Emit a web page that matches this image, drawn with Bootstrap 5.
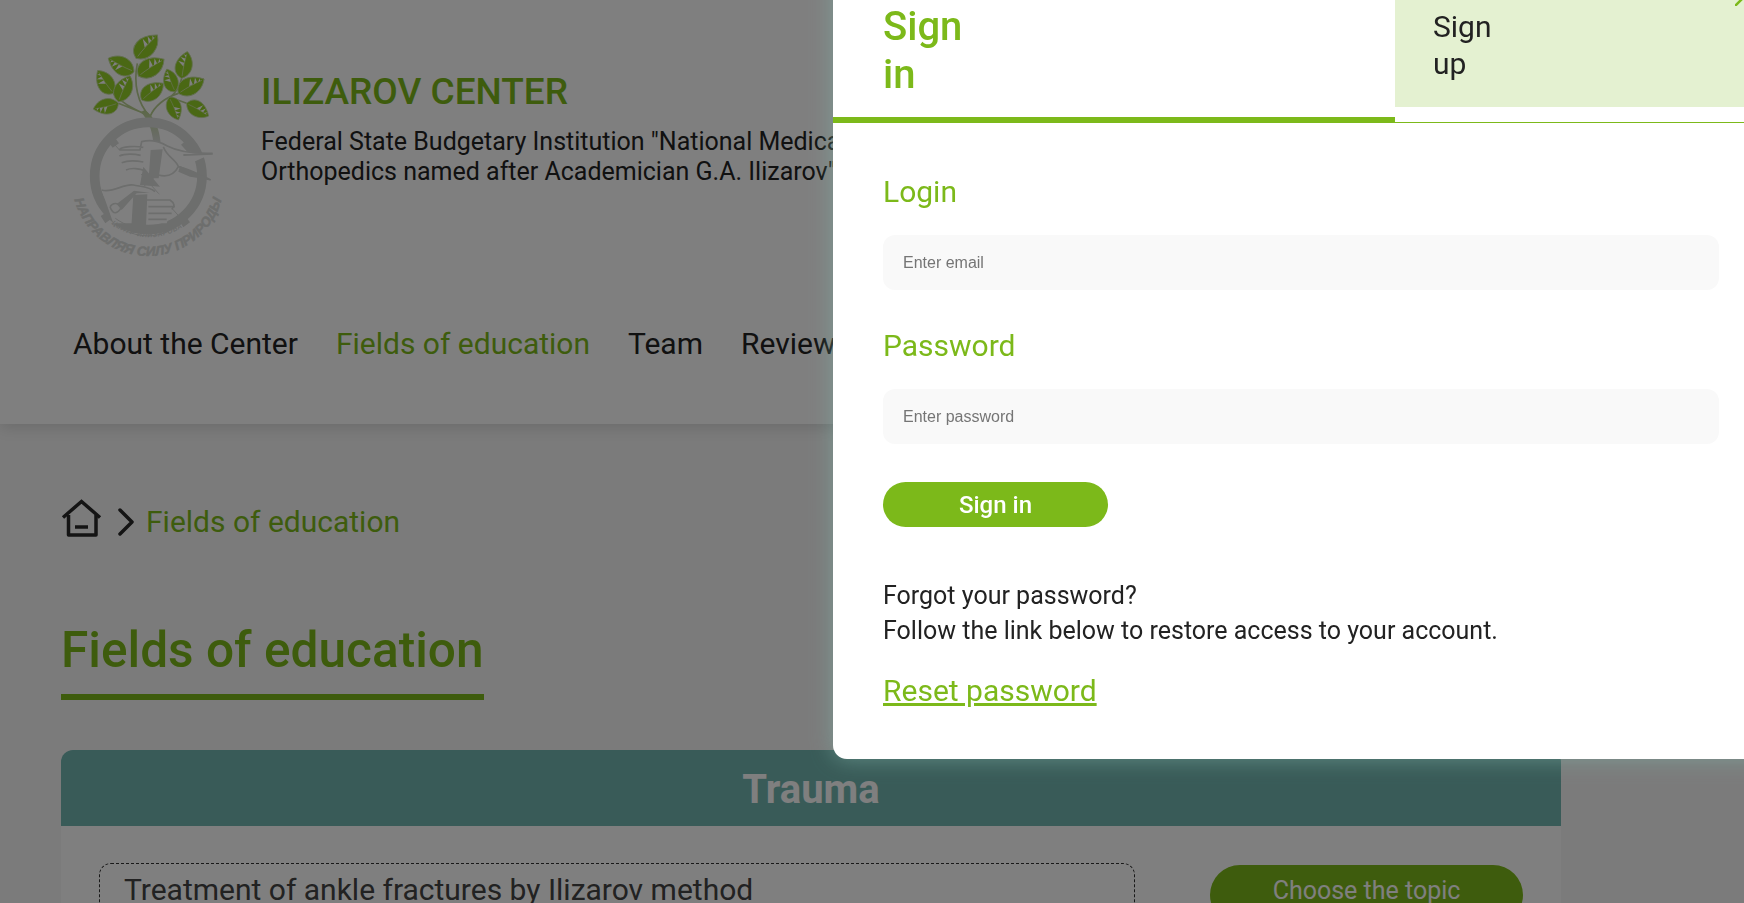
<!DOCTYPE html>
<html lang="en">
<head>
  <meta charset="UTF-8">
  <meta name="viewport" content="width=device-width, initial-scale=1.0">
  <title>Ilizarov Center - Fields of education</title>
  <link rel="stylesheet" href="https://cdn.jsdelivr.net/npm/bootstrap@5.3.2/dist/css/bootstrap.min.css">
  <style>
    html, body { height: 100%; }
    body {
      font-family: Roboto, "Liberation Sans", sans-serif;
      background: #f6f6f6;
      color: #222;
      overflow: hidden;
    }
    .site-head {
      background: #fff;
      height: 424px;
      padding: 30px 0 0 70px;
      box-shadow: 0 4px 14px rgba(0,0,0,.12);
    }
    .site-brand { height: 230px; gap: 31px; }
    .site-logo { width: 160px; height: 230px; flex: none; }
    .site-title { font-size: 37px; font-weight: 500; line-height: 40px; color: #7cb91a; margin: 42px 0 15px; white-space: nowrap; }
    .site-sub { font-size: 25px; line-height: 30px; white-space: nowrap; margin: 0; }
    .site-menu { margin: 67px 0 0 3px; gap: 38px; }
    .site-menu a { font-size: 30px; line-height: 34px; color: #222; text-decoration: none; white-space: nowrap; }
    .site-menu a.current { color: #7cb91a; }
    .page-main { padding: 75px 0 0 61px; }
    .crumbs { height: 38px; color: #7cb91a; font-size: 30px; line-height: 38px; }
    .crumbs svg { flex: none; display: block; }
    .crumb-text { margin-top: 8px; }
    .crumbs svg.crumb-sep { margin-top: 8px; }
    .page-title {
      display: inline-block;
      font-size: 49.6px;
      font-weight: 500;
      line-height: 56px;
      color: #7cb91a;
      margin: 85px 0 0;
      padding-bottom: 16px;
      border-bottom: 6px solid #7cb91a;
    }
    .topic-card { width: 1500px; margin-top: 50px; background: #fff; border-radius: 12px 12px 0 0; }
    .topic-head {
      background: #72b6b0;
      color: #fff;
      height: 76px;
      line-height: 79px;
      font-size: 40px;
      font-weight: 700;
      text-align: center;
      border-radius: 12px 12px 0 0;
    }
    .topic-row { padding: 37px 38px 0; }
    .topic-name {
      width: 1036px;
      height: 70px;
      border: 1px dashed #333;
      border-radius: 12px;
      padding: 8px 24px;
      font-size: 30px;
      line-height: 36px;
      color: #444;
    }
    .topic-btn.btn {
      width: 313px;
      height: 60px;
      margin-top: 2px;
      padding: 0 0 8px;
      background: #7cb91a;
      border: 0;
      color: #fff;
      font-size: 25px;
    }
    .signin-box {
      position: fixed;
      top: -30px;
      left: 833px;
      width: 936px;
      z-index: 1055;
      background: #fff;
      border-radius: 0 0 0 14px;
      box-shadow: 0 0 22px rgba(125,175,165,.6);
    }
    .signin-tabs { height: 153px; border-bottom: 1px solid #7cb91a; }
    .signin-tab { color: #7cb91a; width: 562px; height: 153px; padding: 33px 50px 0; font-size: 40px; font-weight: 500; line-height: 48px; border-bottom: 6px solid #7cb91a; }
    .signup-tab { flex: 1; height: 137px; padding: 38px 38px 0; background: #e4f1d1; color: #222; font-size: 30px; line-height: 37px; }
    .signin-close { position: absolute; top: 16px; right: 14px; display: block; }
    .signin-body { padding: 51px 50px 50px; }
    .signin-label { display: block; font-size: 30px; line-height: 36px; color: #7cb91a; margin: 0 0 25px; }
    .signin-input.form-control {
      height: 55px;
      margin-bottom: 38px;
      padding: 0 20px;
      background: #f9f9f9;
      border: 0;
      border-radius: 12px;
      font-family: "Liberation Sans", Arial, sans-serif;
      font-size: 16px;
    }
    .signin-input.form-control::placeholder { color: #757575; opacity: 1; }
    .signin-btn.btn {
      display: block;
      width: 225px;
      height: 45px;
      margin-top: 38px;
      padding: 0;
      background: #7cb91a;
      border: 0;
      color: #fff;
      font-size: 24px;
      font-weight: 500;
    }
    .signin-note { font-size: 25px; line-height: 35px; color: #222; margin: 51px 0 25px; }
    .signin-reset { display: block; font-size: 30px; line-height: 36px; color: #7cb91a; }
    .signin-reset:hover { color: #7cb91a; }
  </style>
</head>
<body>

<header class="site-head">
  <div class="site-brand d-flex">
    <svg class="site-logo" viewBox="60 60 480 690" aria-hidden="true">
      <defs>
        <linearGradient id="trunk" x1="0" y1="0" x2="0" y2="1">
          <stop offset="0" stop-color="#b8cf90"/>
          <stop offset="1" stop-color="#dadcda"/>
        </linearGradient>
        <g id="leaf">
          <path d="M0 0C10 -40 60 -46 100 0C74 36 22 40 0 0Z" fill="#94d028" stroke="#c4dca0" stroke-width="3"/>
          <path d="M8 0C36 -3 66 -2 92 0" fill="none" stroke="#dfe8cc" stroke-width="2"/>
          <path d="M44 -3L60 -26L58 -3ZM62 -2L76 -20L74 -2ZM78 -1L88 -10L86 -1Z" fill="#fff"/>
        </g>
      </defs>
      <!-- stems -->
      <path d="M262 160C250 220 262 280 300 320M300 320C312 290 345 262 385 250L462 207M300 320C250 295 222 285 190 250M205 280L270 305M360 262L410 280M395 205C390 230 380 245 360 262" fill="none" stroke="#b8cf90" stroke-width="5"/>
      <path d="M285 300C318 325 328 360 332 398L310 398C306 360 296 330 272 306Z" fill="url(#trunk)"/>
      <!-- leaves -->
      <use href="#leaf" transform="translate(258 145) rotate(-47.6) scale(.95)"/>
      <use href="#leaf" transform="translate(252 185) rotate(-152.5) scale(.87)"/>
      <use href="#leaf" transform="translate(265 198) rotate(-33) scale(.92)"/>
      <use href="#leaf" transform="translate(190 250) rotate(-124.6) scale(.83)"/>
      <use href="#leaf" transform="translate(205 275) rotate(-65.8) scale(.85)"/>
      <use href="#leaf" transform="translate(275 270) rotate(-37.6) scale(.82)"/>
      <use href="#leaf" transform="translate(205 280) rotate(167) scale(.77)"/>
      <use href="#leaf" transform="translate(395 205) rotate(-78) scale(.82)"/>
      <use href="#leaf" transform="translate(375 245) rotate(-110) scale(.72)"/>
      <use href="#leaf" transform="translate(385 250) rotate(-29) scale(.88)"/>
      <use href="#leaf" transform="translate(358 262) rotate(68) scale(.73)"/>
      <use href="#leaf" transform="translate(410 280) rotate(30) scale(.76)"/>
      <!-- ring and clamps -->
      <circle cx="295" cy="498" r="161" fill="none" stroke="#dadcda" stroke-width="29"/>
      <path d="M166 384L186 371L207 400L188 413ZM393 404L414 387L436 414L416 430ZM152 618L186 597L198 616L166 640ZM380 622L398 607L420 637L400 652Z" fill="#dadcda"/>
      <path d="M195 405L390 622M405 425L185 610" stroke="#dadcda" stroke-width="3" fill="none"/>
      <!-- hands, cleared from the ring -->
      <path d="M208 420H270L275 395C300 388 330 395 352 408C375 420 420 432 488 430L400 470L385 480C370 500 345 500 325 495L230 490Z" fill="#fff"/>
      <path d="M155 540C190 550 220 520 250 525C275 530 300 530 315 545L360 570C375 580 375 590 365 598L350 640H190Z" fill="#fff"/>
      <!-- bar between the hands -->
      <path d="M302 420L338 418L326 505L296 505ZM250 555L292 553L288 650L244 650Z" fill="#dadcda"/>
      <path d="M280 470L330 530L270 525Z" fill="#dadcda"/>
      <path d="M208 420H270L275 395C300 388 330 395 352 408C375 420 420 432 488 430M208 420C214 408 260 408 280 412M208 438C225 430 255 432 272 436M215 458C235 450 260 452 280 456M228 480C245 472 270 476 285 482M340 410C350 440 380 450 385 470C370 500 345 500 325 495M385 470C420 478 450 495 482 510L440 498" fill="none" stroke="#dadcda" stroke-width="5"/>
      <path d="M400 432C430 432 460 432 488 430L488 434L400 438ZM390 468L482 510L420 500L385 485Z" fill="#dadcda"/>
      <path d="M155 540C190 550 220 520 250 525C275 530 300 530 315 545M290 570H360C375 580 375 590 365 598M295 590H375M295 610H365M295 628H350M180 590C190 575 205 580 215 590C205 610 190 618 180 590" fill="none" stroke="#dadcda" stroke-width="5"/>
      <path d="M200 582L252 542L300 548L260 550L215 600Z" fill="#dadcda"/>
      <!-- lettering -->
      <path id="bandArc" d="M172 630A178 178 0 0 0 412 640" fill="none"/>
      <path d="M190 640C255 690 335 690 390 640M196 625C255 668 335 668 384 625" fill="none" stroke="#dadcda" stroke-width="3"/>
      <text font-family="'Liberation Sans', sans-serif" font-size="20" font-weight="700" font-style="italic" fill="#dadcda" letter-spacing="2">
        <textPath href="#bandArc" startOffset="50%" text-anchor="middle">ЦЕНТР ИЛИЗАРОВА</textPath>
      </text>
      <path id="mottoArc" d="M66 510A228 228 0 0 0 522 510" fill="none"/>
      <text font-family="'Liberation Sans', sans-serif" font-size="40" font-weight="700" font-style="italic" fill="#dadcda" stroke="#dadcda" stroke-width="1.5">
        <textPath href="#mottoArc" startOffset="50%" text-anchor="middle">НАПРАВЛЯЯ СИЛУ ПРИРОДЫ</textPath>
      </text>
    </svg>
    <div>
      <div class="site-title">ILIZAROV CENTER</div>
      <p class="site-sub">Federal State Budgetary Institution "National Medical Research Center for Traumatology and<br>Orthopedics named after Academician G.A. Ilizarov" of the Ministry of Health of Russia</p>
    </div>
  </div>
  <nav class="site-menu d-flex">
    <a href="#">About the Center</a>
    <a href="#" class="current">Fields of education</a>
    <a href="#">Team</a>
    <a href="#">Reviews</a>
  </nav>
</header>

<main class="page-main">
  <nav class="crumbs d-flex align-items-center">
    <svg width="41" height="38" viewBox="0 0 41 38" fill="none" stroke="#282828" stroke-width="3.5">
      <path d="M2 18.5L20.5 2.5L39 18.5"/>
      <path d="M7.5 16V36H35V16" stroke-linejoin="round"/>
      <path d="M14 28H27"/>
    </svg>
    <svg class="crumb-sep ms-3 me-2" width="16" height="28" viewBox="0 0 16 28" fill="none" stroke="#282828" stroke-width="3.5" stroke-linecap="round" stroke-linejoin="round">
      <path d="M2 2L14 14L2 26"/>
    </svg>
    <span class="crumb-text ms-1">Fields of education</span>
  </nav>
  <h1 class="page-title">Fields of education</h1>

  <section class="topic-card">
    <div class="topic-head">Trauma</div>
    <div class="topic-row d-flex justify-content-between align-items-start">
      <div class="topic-name">Treatment of ankle fractures by Ilizarov method</div>
      <button class="topic-btn btn rounded-pill">Choose the topic</button>
    </div>
  </section>
</main>

<div class="modal-backdrop fade show"></div>

<div class="signin-box">
  <div class="signin-tabs d-flex align-items-start">
    <div class="signin-tab">Sign<br>in</div>
    <div class="signup-tab">Sign<br>up</div>
  </div>
  <svg class="signin-close" width="20" height="20" viewBox="0 0 20 20" stroke="#7cb91a" stroke-width="2.5" aria-hidden="true">
    <path d="M0 20L20 0M0 0L20 20"/>
  </svg>
  <form class="signin-body">
    <label class="signin-label" for="loginEmail">Login</label>
    <input id="loginEmail" class="signin-input form-control" type="text" placeholder="Enter email">
    <label class="signin-label" for="loginPass">Password</label>
    <input id="loginPass" class="signin-input form-control mb-0" type="password" placeholder="Enter password">
    <button type="button" class="signin-btn btn rounded-pill">Sign in</button>
    <p class="signin-note">Forgot your password?<br>Follow the link below to restore access to your account.</p>
    <a class="signin-reset" href="#">Reset password</a>
  </form>
</div>

<script src="https://cdn.jsdelivr.net/npm/bootstrap@5.3.2/dist/js/bootstrap.bundle.min.js"></script>
</body>
</html>
